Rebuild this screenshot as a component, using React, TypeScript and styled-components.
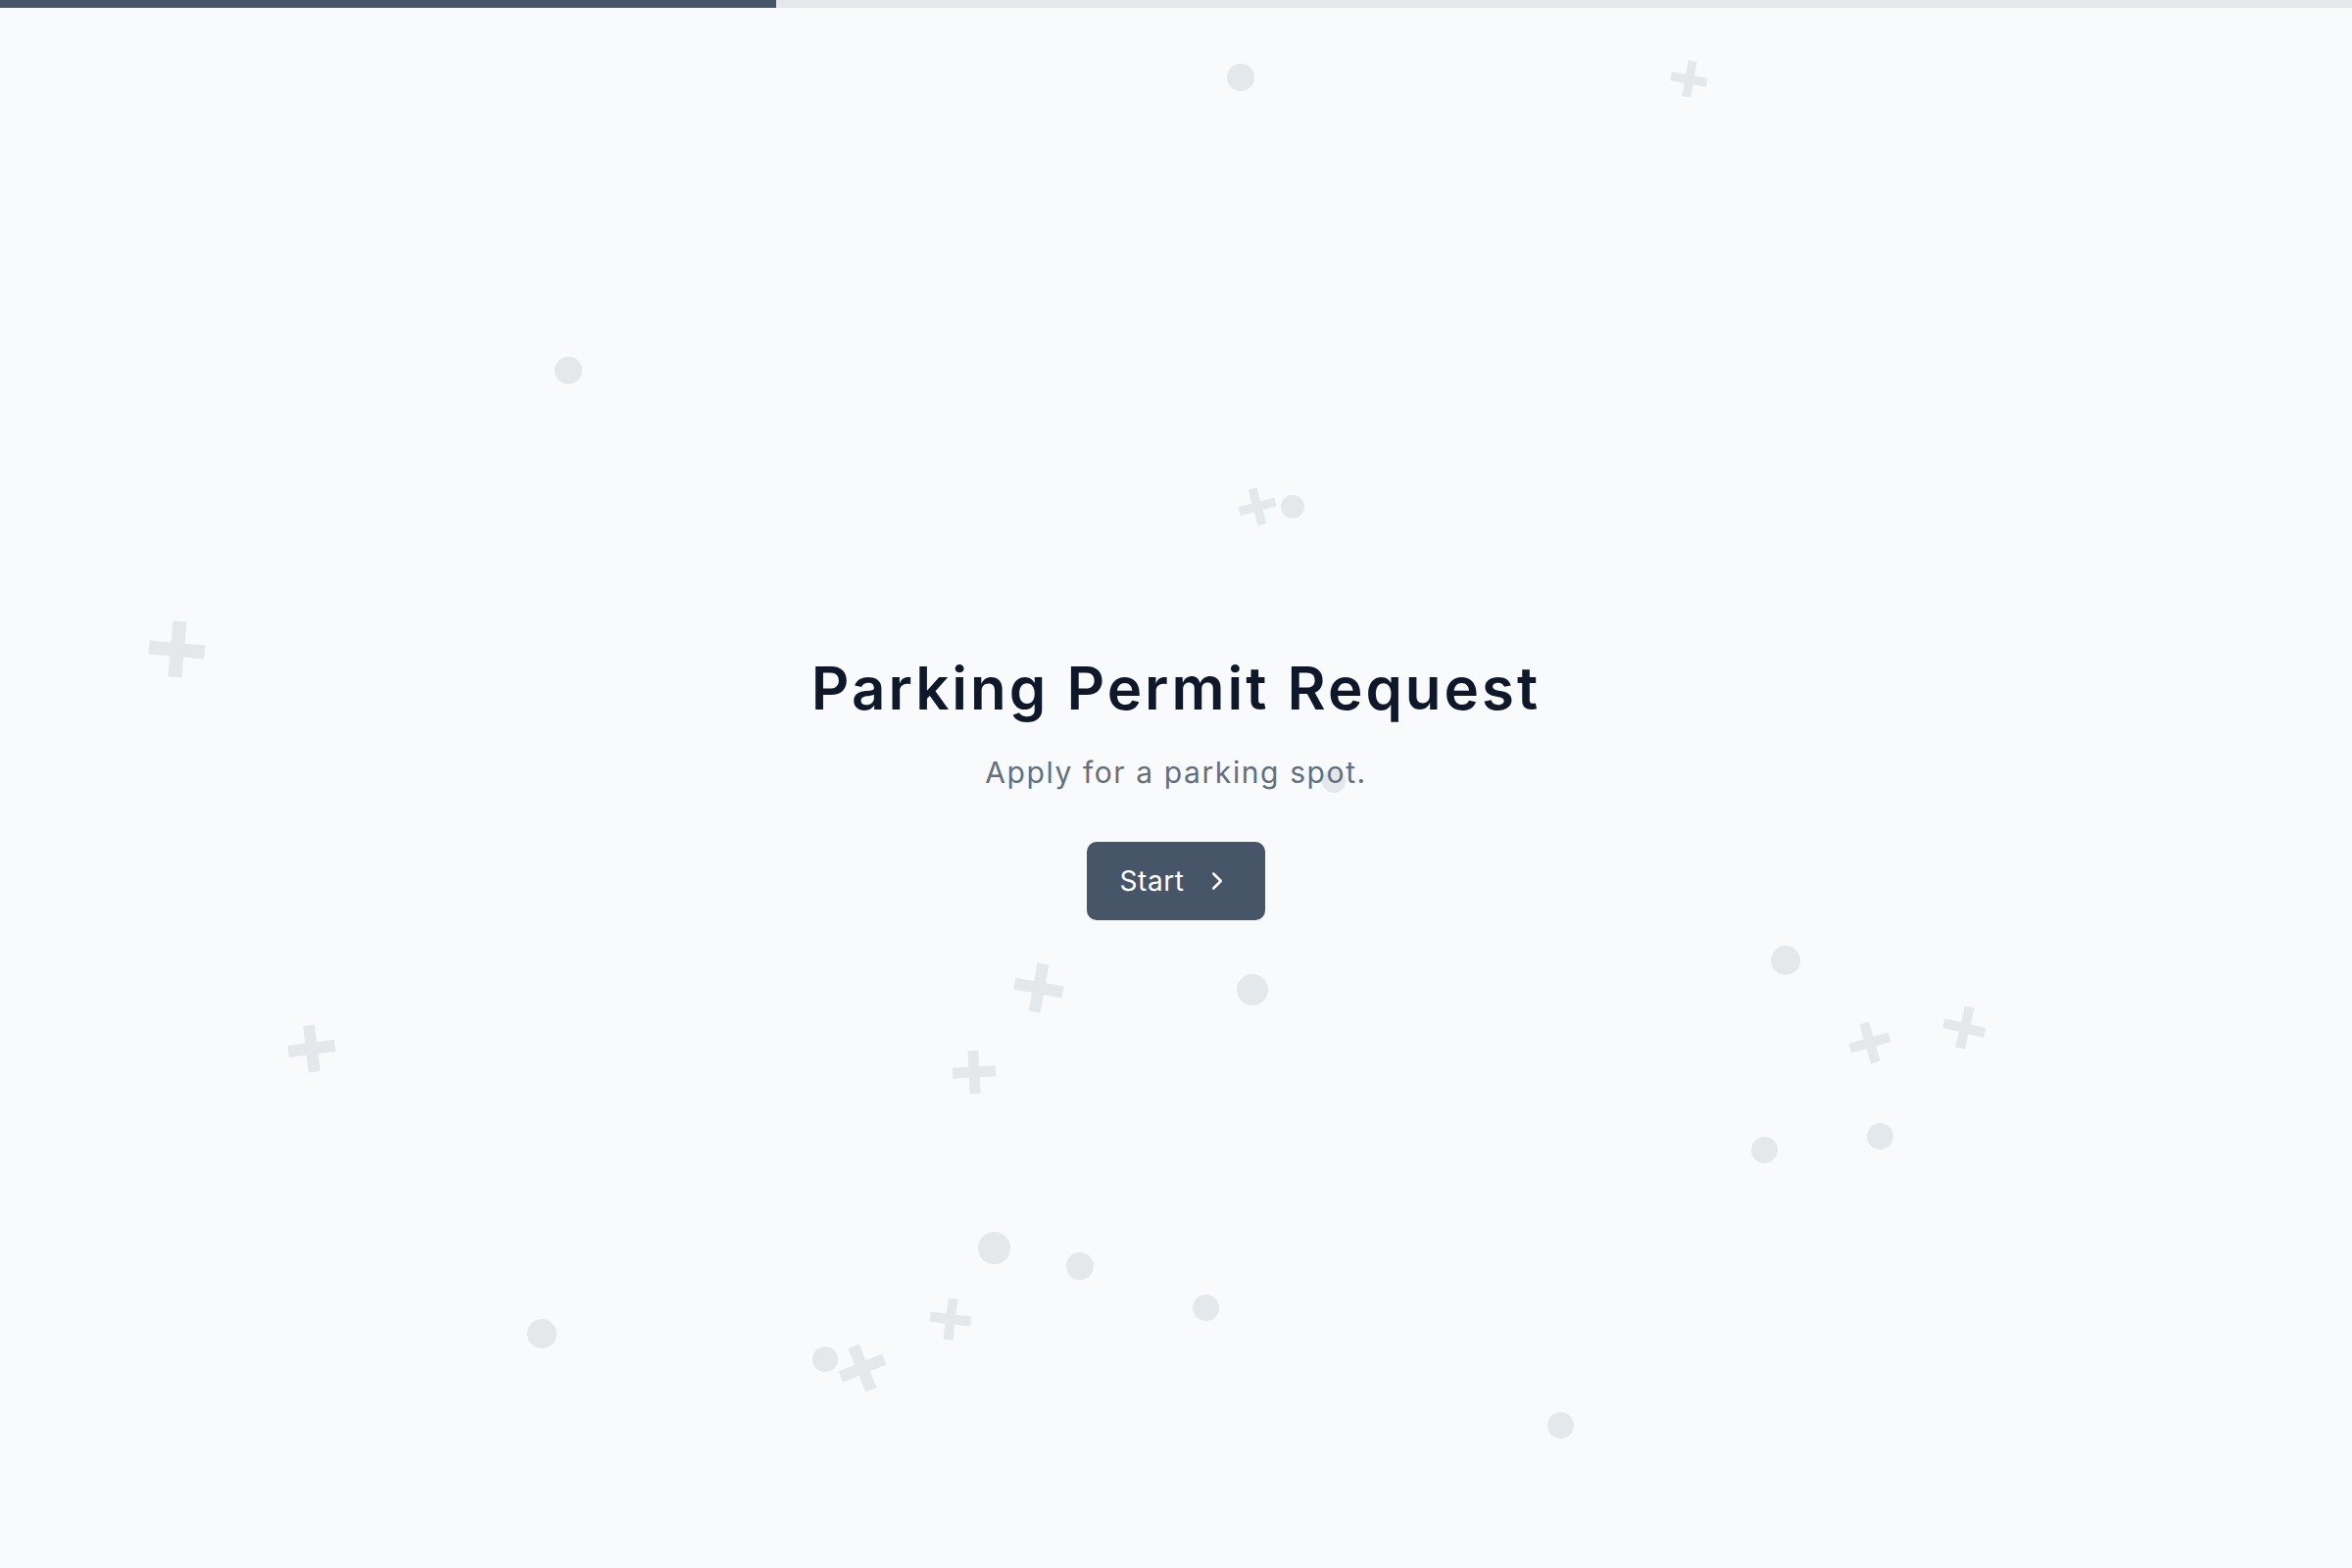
import React from 'react';
import styled, { createGlobalStyle } from 'styled-components';
import { ChevronRight } from 'lucide-react';

const GlobalStyle = createGlobalStyle`
  html, body {
    margin: 0;
    padding: 0;
    background: #f8fafc;
  }
  body {
    font-family: Inter, "Noto Sans", "Liberation Sans", sans-serif;
    -webkit-font-smoothing: antialiased;
  }
`;

const Page = styled.div`
  position: relative;
  min-height: 100vh;
  overflow: hidden;
  background: #f8fafc;
  display: flex;
  flex-direction: column;
`;

const Progress = styled.div`
  height: 8px;
  background: #e5e7eb;
  flex-shrink: 0;
  position: relative;
  z-index: 2;
`;

const ProgressFill = styled.div<{ $pct: number }>`
  height: 100%;
  width: ${(p) => p.$pct}%;
  background: #475569;
`;

const Decor = styled.div`
  position: absolute;
  inset: 0;
  pointer-events: none;
  z-index: 0;
`;

const Dot = styled.span<{ $x: number; $y: number; $d: number }>`
  position: absolute;
  left: ${(p) => p.$x - p.$d / 2}px;
  top: ${(p) => p.$y - p.$d / 2}px;
  width: ${(p) => p.$d}px;
  height: ${(p) => p.$d}px;
  border-radius: 50%;
  background: #e4e8eb;
`;

const Cross = styled.span<{ $x: number; $y: number; $s: number; $r: number }>`
  position: absolute;
  left: ${(p) => p.$x - p.$s / 2}px;
  top: ${(p) => p.$y - p.$s / 2}px;
  width: ${(p) => p.$s}px;
  height: ${(p) => p.$s}px;
  transform: rotate(${(p) => p.$r}deg);

  &::before,
  &::after {
    content: '';
    position: absolute;
    background: #e4e8eb;
  }
  &::before {
    left: 0;
    right: 0;
    top: 50%;
    height: ${(p) => Math.round(p.$s * 0.24)}px;
    transform: translateY(-50%);
  }
  &::after {
    top: 0;
    bottom: 0;
    left: 50%;
    width: ${(p) => Math.round(p.$s * 0.24)}px;
    transform: translateX(-50%);
  }
`;

const Main = styled.main`
  position: relative;
  z-index: 1;
  flex: 1;
  display: flex;
  flex-direction: column;
  align-items: center;
  justify-content: center;
  text-align: center;
  padding-bottom: 4px;
`;

const Title = styled.h1`
  margin: 0;
  font-size: 60px;
  line-height: 72px;
  font-weight: 600;
  color: #0f172a;
  letter-spacing: 3px;
`;

const Subtitle = styled.p`
  margin: 28px 0 0;
  font-size: 30px;
  line-height: 44px;
  font-weight: 400;
  color: #646f7e;
  letter-spacing: 1.6px;
`;

const StartButton = styled.button`
  margin-top: 49px;
  height: 80px;
  padding: 0 34px 0 33px;
  display: inline-flex;
  align-items: center;
  gap: 18px;
  border: none;
  border-radius: 10px;
  background: #475569;
  color: #ffffff;
  font-family: inherit;
  font-size: 28px;
  font-weight: 400;
  letter-spacing: 0.6px;
  cursor: pointer;
`;

const dots: [number, number, number][] = [
  [1266, 79, 28],
  [580, 378, 28],
  [1319, 517, 24],
  [1361, 797, 24],
  [1278, 1010, 32],
  [1822, 980, 30],
  [1800, 1173, 27],
  [1918, 1159, 27],
  [1014, 1273, 33],
  [1102, 1292, 28],
  [1230, 1334, 27],
  [553, 1361, 30],
  [842, 1387, 26],
  [1592, 1454, 27],
];

const crosses: [number, number, number, number][] = [
  [1723, 80, 37, 10],
  [1283, 517, 38, -15],
  [180, 662, 57, 5],
  [318, 1070, 48, -7],
  [1060, 1008, 50, 10],
  [994, 1094, 44, -3],
  [1908, 1064, 42, -16],
  [2004, 1048, 43, 13],
  [970, 1346, 42, 7],
  [880, 1396, 48, -22],
];

export default function App() {
  return (
    <>
      <GlobalStyle />
      <Page>
        <Progress>
          <ProgressFill $pct={33} />
        </Progress>
        <Decor>
          {dots.map(([x, y, d], i) => (
            <Dot key={`d${i}`} $x={x} $y={y} $d={d} />
          ))}
          {crosses.map(([x, y, s, r], i) => (
            <Cross key={`c${i}`} $x={x} $y={y} $s={s} $r={r} />
          ))}
        </Decor>
        <Main>
          <Title>Parking Permit Request</Title>
          <Subtitle>Apply for a parking spot.</Subtitle>
          <StartButton>
            Start
            <ChevronRight size={30} strokeWidth={2} />
          </StartButton>
        </Main>
      </Page>
    </>
  );
}
